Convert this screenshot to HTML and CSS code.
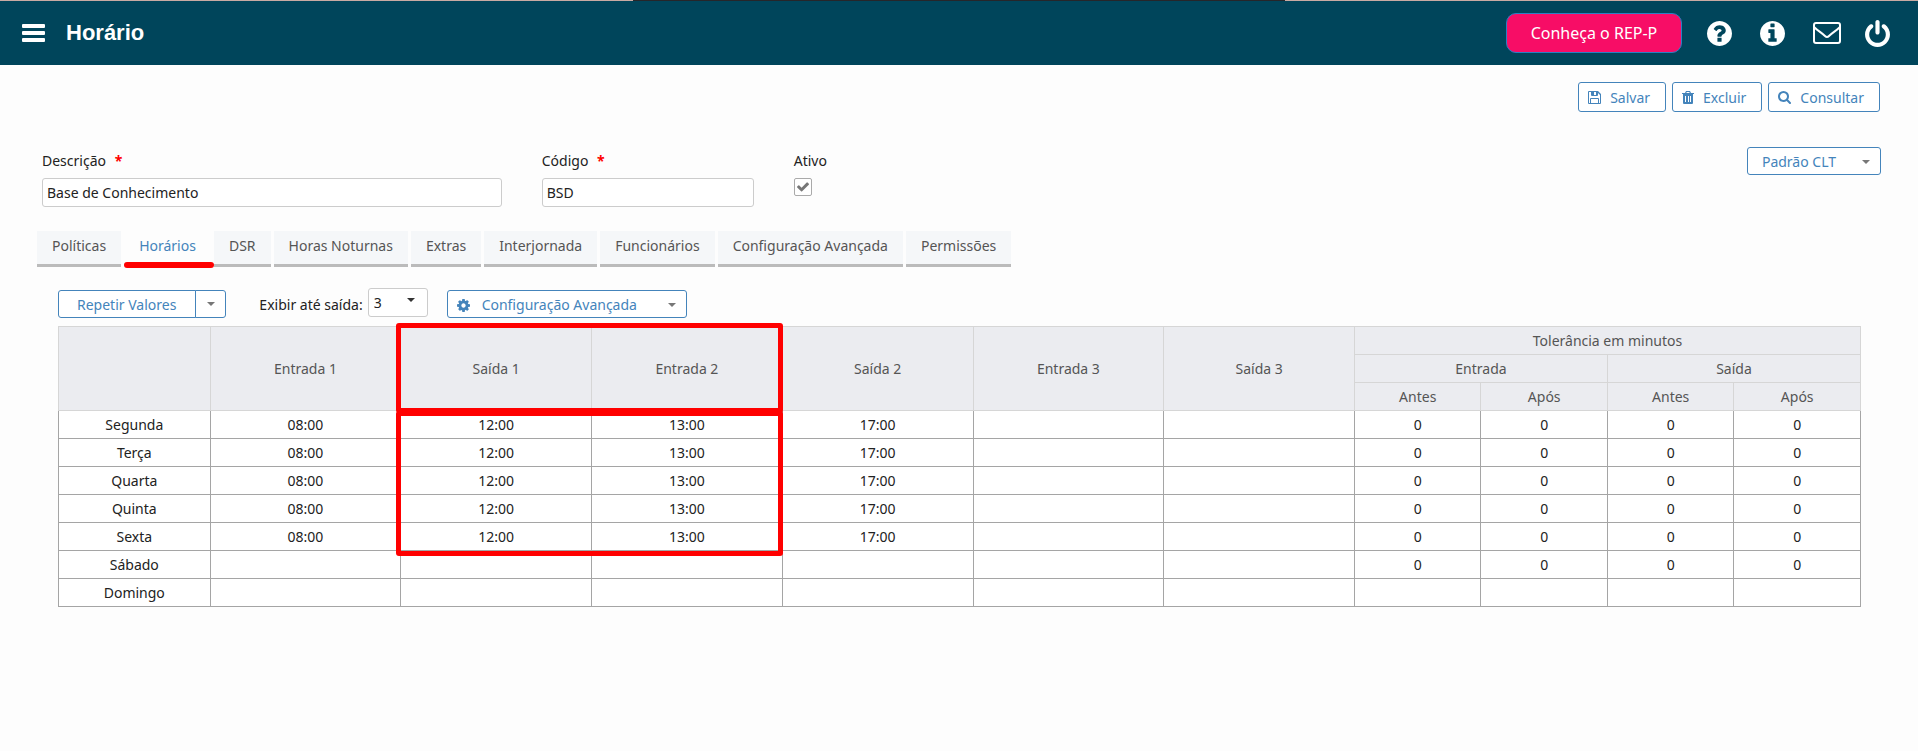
FILE: index.html
```
<!DOCTYPE html>
<html lang="pt-BR">
<head>
  <meta charset="UTF-8">
  <meta name="viewport" content="width=device-width, initial-scale=1.0">
  <title>Horário</title>
  <link rel="stylesheet" href="styles.css">
</head>
<body>
  <header class="topbar">
    <button class="icon-btn menu" aria-label="Menu">
      <svg width="23" height="18" viewBox="0 0 23 18"><rect width="23" height="4" rx="1"/><rect y="7" width="23" height="4" rx="1"/><rect y="14" width="23" height="4" rx="1"/></svg>
    </button>
    <h1>Horário</h1>
    <button class="rep">Conheça o REP-P</button>
    <nav class="icons">
      <a href="#" aria-label="Ajuda"><svg width="25" height="25" viewBox="128 128 1536 1536"><path d="M1024 1376v-192q0-14-9-23t-23-9h-192q-14 0-23 9t-9 23v192q0 14 9 23t23 9h192q14 0 23-9t9-23zm256-672q0-88-55.500-163t-138.500-116-170-41q-243 0-371 213-15 24 8 42l132 100q7 6 19 6 16 0 25-12 53-68 86-92 34-24 86-24 48 0 85.500 26t37.500 59q0 38-20 61t-68 45q-63 28-115.500 86.500t-52.500 125.500v36q0 14 9 23t23 9h192q14 0 23-9t9-23q0-19 21.500-49.500t54.500-49.500q32-18 49-28.500t46-35 44.500-48 28-60.500 12.500-81zm384 192q0 209-103 385.500t-279.500 279.500-385.500 103-385.500-103-279.500-279.500-103-385.500 103-385.500 279.500-279.500 385.500-103 385.500 103 279.500 279.500 103 385.500z"/></svg></a>
      <a href="#" aria-label="Informações"><svg width="25" height="25" viewBox="128 128 1536 1536"><path d="M1152 1376v-160q0-14-9-23t-23-9h-96v-512q0-14-9-23t-23-9h-320q-14 0-23 9t-9 23v160q0 14 9 23t23 9h96v320h-96q-14 0-23 9t-9 23v160q0 14 9 23t23 9h448q14 0 23-9t9-23zm-128-896v-160q0-14-9-23t-23-9h-192q-14 0-23 9t-9 23v160q0 14 9 23t23 9h192q14 0 23-9t9-23zm640 416q0 209-103 385.500t-279.500 279.500-385.500 103-385.500-103-279.500-279.500-103-385.500 103-385.500 279.500-279.500 385.500-103 385.500 103 279.500 279.500 103 385.500z"/></svg></a>
      <a href="#" aria-label="Mensagens"><svg class="line" width="28" height="22" viewBox="0 0 28 22"><rect x="1" y="1" width="26" height="20" rx="2"/><path d="M1 5c4 4 8 6 11 9q2 2 4 0c3-3 7-5 11-9"/></svg></a>
      <a href="#" aria-label="Sair"><svg width="25" height="27" viewBox="128 0 1536 1664"><path d="M1664 896q0 156-61 298t-164 245-245 164-298 61-298-61-245-164-164-245-61-298q0-182 80.500-343t226.500-270q43-32 95.500-25t83.500 50q32 42 24.500 94.500t-49.500 84.500q-98 74-151.500 181t-53.500 228q0 104 40.500 198.500t109.500 163.500 163.500 109.500 198.500 40.500 198.500-40.500 163.500-109.500 109.500-163.500 40.500-198.500q0-121-53.500-228t-151.500-181q-42-32-49.500-84.500t24.500-94.500q31-43 84-50t95 25q146 109 226.500 270t80.500 343zm-640-768v640q0 52-38 90t-90 38-90-38-38-90v-640q0-52 38-90t90-38 90 38 38 90z"/></svg></a>
    </nav>
  </header>

  <main>
    <div class="actions">
      <button class="btn"><svg width="13" height="13" viewBox="0 0 13 13"><path fill-rule="evenodd" d="M0 1q0-1 1-1h9l3 3v9q0 1-1 1h-11q-1 0-1-1zM1 1v11h1v-4q0-1 1-1h7q1 0 1 1v4h1v-8l-2-2v2q0 1-1 1h-5q-1 0-1-1v-3zM6 1v3h2v-3zM3 8v4h7v-4z"/></svg>Salvar</button>
      <button class="btn"><svg width="12" height="13" viewBox="0 0 12 13"><path fill-rule="evenodd" d="M0 2h3l1-2h4l1 2h3v1h-1v9q0 1-1 1h-8q-1 0-1-1v-9h-1zM4 2h4l-1-1h-2zM3 5v6h1v-6zM6 5v6h1v-6zM8 5v6h1v-6z"/></svg>Excluir</button>
      <button class="btn"><svg width="13" height="13" viewBox="64 128 1664 1664"><path d="M1216 832q0-185-131.500-316.500t-316.500-131.500-316.500 131.500-131.500 316.500 131.500 316.500 316.500 131.500 316.500-131.500 131.500-316.500zm512 832q0 52-38 90t-90 38q-54 0-90-38l-343-342q-179 124-399 124-143 0-273.500-55.500t-225-150-150-225-55.500-273.500 55.500-273.500 150-225 225-150 273.500-55.500 273.500 55.500 225 150 150 225 55.500 273.500q0 220-124 399l343 343q37 37 37 90z"/></svg>Consultar</button>
    </div>

    <div class="form">
      <div class="field descricao">
        <label for="descricao">Descrição <b>*</b></label>
        <input type="text" id="descricao" value="Base de Conhecimento">
      </div>
      <div class="field codigo">
        <label for="codigo">Código <b>*</b></label>
        <input type="text" id="codigo" value="BSD">
      </div>
      <div class="field">
        <label for="ativo">Ativo</label>
        <span class="check">
          <input type="checkbox" id="ativo" checked>
          <svg width="12" height="10" viewBox="120 330 1552 1200"><path d="M1671 566q0 40-28 68l-724 724-136 136q-28 28-68 28t-68-28l-136-136-362-362q-28-28-28-68t28-68l136-136q28-28 68-28t68 28l294 295 656-657q28-28 68-28t68 28l136 136q28 28 28 68z"/></svg>
        </span>
      </div>
      <button class="btn small padrao">Padrão CLT <i class="caret"></i></button>
    </div>

    <nav class="tabs">
      <button>Políticas</button>
      <button class="active">Horários</button>
      <button>DSR</button>
      <button>Horas Noturnas</button>
      <button>Extras</button>
      <button>Interjornada</button>
      <button>Funcionários</button>
      <button>Configuração Avançada</button>
      <button>Permissões</button>
    </nav>

    <section class="panel">
      <div class="tools">
        <div class="split">
          <button class="btn small">Repetir Valores</button>
          <button class="btn small" aria-label="Mais opções"><i class="caret"></i></button>
        </div>
        <div class="exibir">
          <label for="saidas">Exibir até saída:</label>
          <span class="select">
            <select id="saidas">
              <option>1</option>
              <option>2</option>
              <option selected>3</option>
            </select>
          </span>
        </div>
        <button class="btn small config"><svg width="13" height="13" viewBox="128 128 1536 1536"><path d="M1152 896q0-106-75-181t-181-75-181 75-75 181 75 181 181 75 181-75 75-181zm512-109v222q0 12-8 23t-20 13l-185 28q-19 54-39 91 35 50 107 138 10 12 10 25t-9 23q-27 37-99 108t-94 71q-12 0-26-9l-138-108q-44 23-91 38-16 136-29 186-7 28-36 28h-222q-14 0-24.500-8.500t-11.500-21.500l-28-184q-49-16-90-37l-141 107q-10 9-25 9-14 0-25-11-126-114-165-168-7-10-7-23 0-12 8-23 15-21 51-66.500t54-70.500q-27-50-41-99l-183-27q-13-2-21-12.500t-8-23.500v-222q0-12 8-23t19-13l186-28q14-46 39-92-40-57-107-138-10-12-10-24 0-10 9-23 26-36 98.500-107.500t94.500-71.500q13 0 26 10l138 107q44-23 91-38 16-136 29-186 7-28 36-28h222q14 0 24.500 8.500t11.500 21.500l28 184q49 16 90 37l142-107q9-9 24-9 13 0 25 10 129 119 165 170 7 8 7 22 0 12-8 23-15 21-51 66.500t-54 70.500q26 50 41 98l183 28q13 2 21 12.500t8 23.500z"/></svg>Configuração Avançada <i class="caret"></i></button>
      </div>

      <table>
        <colgroup>
          <col class="dia">
          <col class="hora" span="6">
          <col class="tol" span="4">
        </colgroup>
        <thead>
          <tr>
            <th rowspan="3"></th>
            <th rowspan="3">Entrada 1</th>
            <th rowspan="3" class="mark mark-head">Saída 1</th>
            <th rowspan="3">Entrada 2</th>
            <th rowspan="3">Saída 2</th>
            <th rowspan="3">Entrada 3</th>
            <th rowspan="3">Saída 3</th>
            <th colspan="4">Tolerância em minutos</th>
          </tr>
          <tr><th colspan="2">Entrada</th><th colspan="2">Saída</th></tr>
          <tr><th>Antes</th><th>Após</th><th>Antes</th><th>Após</th></tr>
        </thead>
        <tbody>
          <tr><td>Segunda</td><td>08:00</td><td class="mark mark-body">12:00</td><td>13:00</td><td>17:00</td><td></td><td></td><td>0</td><td>0</td><td>0</td><td>0</td></tr>
          <tr><td>Terça</td><td>08:00</td><td>12:00</td><td>13:00</td><td>17:00</td><td></td><td></td><td>0</td><td>0</td><td>0</td><td>0</td></tr>
          <tr><td>Quarta</td><td>08:00</td><td>12:00</td><td>13:00</td><td>17:00</td><td></td><td></td><td>0</td><td>0</td><td>0</td><td>0</td></tr>
          <tr><td>Quinta</td><td>08:00</td><td>12:00</td><td>13:00</td><td>17:00</td><td></td><td></td><td>0</td><td>0</td><td>0</td><td>0</td></tr>
          <tr><td>Sexta</td><td>08:00</td><td>12:00</td><td>13:00</td><td>17:00</td><td></td><td></td><td>0</td><td>0</td><td>0</td><td>0</td></tr>
          <tr><td>Sábado</td><td></td><td></td><td></td><td></td><td></td><td></td><td>0</td><td>0</td><td>0</td><td>0</td></tr>
          <tr><td>Domingo</td><td></td><td></td><td></td><td></td><td></td><td></td><td></td><td></td><td></td><td></td></tr>
        </tbody>
      </table>
    </section>
  </main>
</body>
</html>
```
FILE: styles.css
```
*, *::after {
  box-sizing: border-box;
}
body {
  margin: 0;
  background-color: #fdfdfd;
  color: #222;
  font-family: "Noto Sans", "Open Sans", sans-serif;
  font-size: 14px;
  line-height: 20px;
}
button, input, select {
  font: inherit;
  color: inherit;
  margin: 0;
}
button {
  padding: 0;
  border: 0;
  background: none;
  cursor: pointer;
  white-space: nowrap;
}
svg {
  display: block;
  fill: currentColor;
}

/* barra superior */
.topbar {
  display: flex;
  align-items: center;
  height: 65px;
  padding: 0 28px 0 22px;
  background-color: #00455b;
  color: #fff;
  border-top: 1px solid;
  border-image: linear-gradient(to right, #c9aaa3 33%, #26262a 33%, #26262a 67%, #c9aaa3 67%) 1;
}
.topbar h1 {
  margin: 0 auto 0 21px;
  font: bold 22px/26px "Liberation Sans", Arial, sans-serif;
}
.rep {
  width: 176px;
  height: 40px;
  background-color: #f70d66;
  border: 1px solid #2a80c4;
  border-radius: 10px;
  font-size: 16px;
}
.icons {
  display: flex;
  align-items: center;
  gap: 28px;
  margin-left: 25px;
}
.icons a {
  color: #fff;
}
.icons a:last-child {
  margin-left: -4px;
}
.line {
  fill: none;
  stroke: currentColor;
  stroke-width: 2;
}

.btn {
  display: inline-flex;
  align-items: center;
  height: 30px;
  padding: 1px 15px 0 9px;
  background-color: #fff;
  border: 1px solid #4484bb;
  border-radius: 3px;
  color: #4484bb;
}
.btn svg {
  margin-right: 9px;
}
.btn.small {
  height: 28px;
}
.caret {
  border: 4px solid transparent;
  border-top-color: #777;
  border-bottom: 0;
}

.actions {
  display: flex;
  justify-content: flex-end;
  gap: 6px;
  padding: 17px 38px 0;
}

/* formulário */
.form {
  display: flex;
  align-items: flex-start;
  padding: 35px 37px 0 42px;
}
.field {
  display: flex;
  flex-direction: column;
  gap: 7px;
  margin: 4px 40px 0 0;
}
.descricao {
  width: 25%;
}
.codigo {
  width: 212px;
}
.field b {
  margin-left: 5px;
  color: #f00;
}
.field input[type="text"] {
  width: 100%;
  height: 29px;
  padding: 0 4px;
  background-color: #fff;
  border: 1px solid #ccc;
  border-radius: 3px;
}
.check {
  position: relative;
  width: 18px;
  height: 18px;
}
.check input {
  appearance: none;
  display: block;
  width: 18px;
  height: 18px;
  background-color: #fff;
  border: 1px solid #aaa;
  border-radius: 2px;
}
.check svg {
  position: absolute;
  top: 4px;
  left: 3px;
  color: #777;
  pointer-events: none;
}
.padrao {
  gap: 26px;
  margin-left: auto;
}
.padrao.btn {
  padding: 1px 10px 0 14px;
}

/* abas */
.tabs {
  display: flex;
  gap: 3px;
  padding: 24px 37px 0;
}
.tabs button {
  position: relative;
  height: 36px;
  padding: 0 15px 4px;
  background-color: #f5f7f9;
  border-bottom: 3px solid #bbb;
  color: #555;
}
.tabs .active {
  background: none;
  border-color: transparent;
  color: #4484bb;
}
.tabs .active::after {
  content: "";
  position: absolute;
  left: 0;
  right: -3px;
  bottom: -4px;
  height: 6px;
  background-color: #f00;
  border-radius: 3px;
}

.panel {
  padding: 21px 57px 0 58px;
}
.tools {
  display: flex;
  align-items: flex-start;
}
.tools .btn {
  margin-top: 2px;
  padding-top: 2px;
}
.split {
  display: flex;
}
.split .btn:first-child {
  padding: 2px 19px 0 18px;
  border-radius: 3px 0 0 3px;
}
.split .btn:last-child {
  width: 31px;
  margin-left: -1px;
  padding: 0;
  justify-content: center;
  border-radius: 0 3px 3px 0;
}
.exibir {
  display: flex;
  align-items: center;
  gap: 5px;
  margin: 0 19px 0 33px;
}
.exibir label {
  padding-top: 4px;
}
.select {
  position: relative;
}
.select::after {
  content: "";
  position: absolute;
  top: 10px;
  right: 13px;
  border: 4px solid transparent;
  border-top-color: #333;
  border-bottom: 0;
  pointer-events: none;
}
.select select {
  appearance: none;
  display: block;
  width: 60px;
  height: 29px;
  padding: 0 5px;
  background-color: #fff;
  border: 1px solid #ccc;
  border-radius: 3px;
}
.config svg {
  margin-right: 12px;
}
.config .caret {
  margin-left: 31px;
}
.config.btn {
  padding-right: 10px;
}

/* grade de horários */
table {
  width: 100%;
  margin-top: 8px;
  table-layout: fixed;
  border-collapse: collapse;
  background-color: #fff;
  text-align: center;
}
.dia {
  width: 151px;
}
.hora {
  width: 190px;
}
.tol {
  width: 126px;
}
th, td {
  height: 28px;
  padding: 1px 0 0;
  border: 1px solid #a5a5a5;
}
th {
  background-color: #ebecf0;
  border-color: #d6d6d6;
  color: #555;
  font-weight: normal;
}
.mark {
  position: relative;
}
.mark::after {
  content: "";
  position: absolute;
  left: -5px;
  width: calc(200% + 7px);
  border: 5px solid #f00;
  border-radius: 3px;
}
.mark-head::after {
  top: -4px;
  height: calc(100% + 7px);
}
.mark-body::after {
  top: 0;
  height: calc(500% + 10px);
}
```
